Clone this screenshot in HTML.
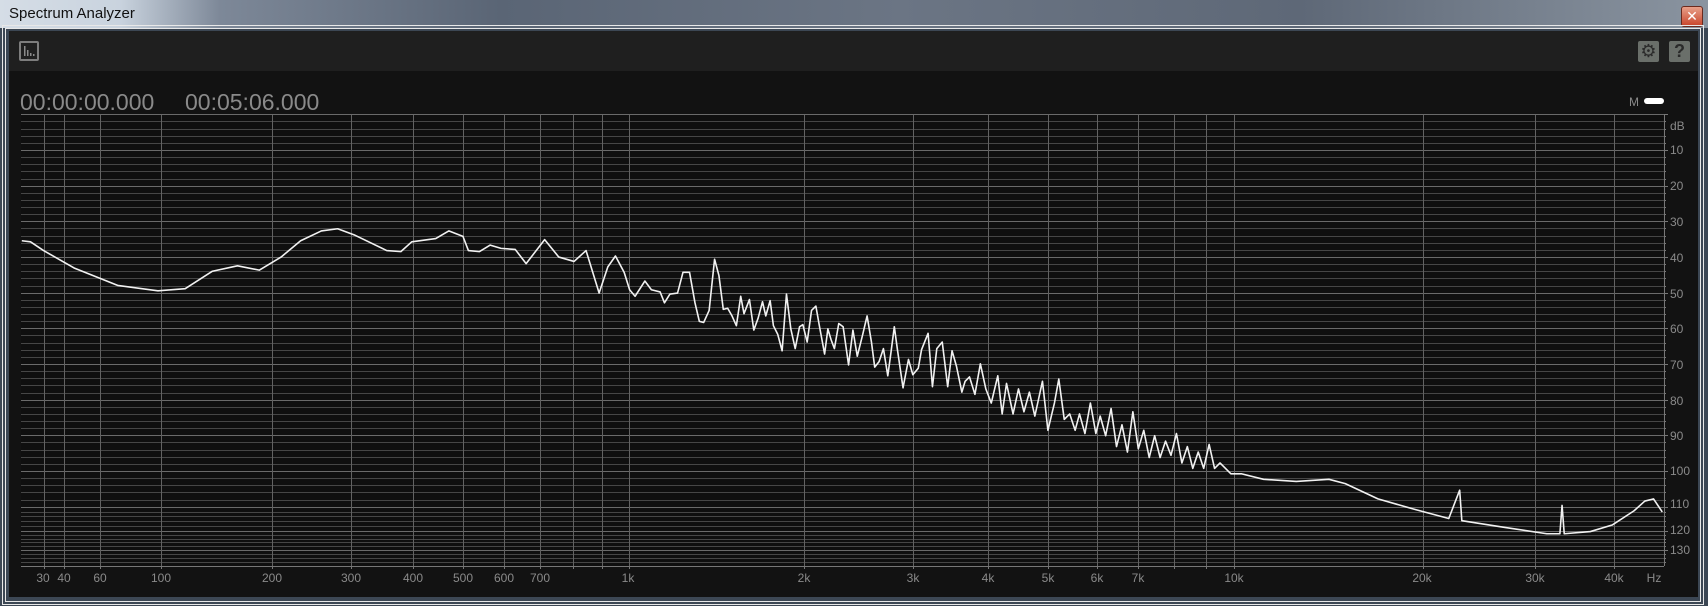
<!DOCTYPE html>
<html><head><meta charset="utf-8">
<style>
html,body{margin:0;padding:0;width:1708px;height:606px;overflow:hidden;background:#3c4754;font-family:"Liberation Sans","DejaVu Sans",sans-serif}
#title{position:absolute;left:0;top:0;width:1708px;height:28px;background:linear-gradient(90deg,#d5dde6 0px,#c9d3de 120px,#7d8898 220px,#5a6575 500px,#6b7584 900px,#5e6877 1300px,#8a94a0 1708px)}
#title span{position:absolute;left:9px;top:5px;font-size:15px;color:#111}
#close{position:absolute;left:1681px;top:6px;width:20px;height:19px;background:linear-gradient(#e8a08a,#c8442a);border:1px solid #6b2a1e;border-radius:3px;color:#fff;font-weight:bold;font-size:14px;text-align:center;line-height:19px}
#frame{position:absolute;left:5px;top:28px;width:1694px;height:572px;border:1px solid #e8e8e8;outline:1px solid #e8e8e8;outline-offset:2px}
#panel{position:absolute;left:9px;top:31px;width:1689px;height:566px;background:#121212}
#tool{position:absolute;left:0;top:0;width:1689px;height:40px;background:#1f1f1f}
.box{position:absolute;width:19px;height:19px;border-radius:2px}
.t{position:absolute;font-size:23px;color:#8a8a8a;top:58px}
.fl{position:absolute;top:571px;font-size:12px;color:#8a8a8a;transform:translateX(-50%)}
.dl{position:absolute;left:1670px;font-size:12px;color:#8a8a8a;transform:translateY(-50%)}
</style></head><body>
<div id="title"><span>Spectrum Analyzer</span></div>
<div id="close">✕</div>
<div id="frame"></div>
<div id="panel">
 <div id="tool">
  <div class="box" style="left:10px;top:10px;border:2px solid #7d7d7d;width:16px;height:16px">
   <svg width="16" height="16" style="position:absolute;left:0;top:0"><g fill="#8a8a8a"><rect x="3" y="3" width="1.5" height="10"/><rect x="6" y="7" width="1.5" height="6"/><rect x="9" y="10" width="1.5" height="3"/><rect x="12" y="11" width="1.5" height="2"/></g></svg>
  </div>
  <div class="box" style="left:1629px;top:10px;background:#6a6f6a;color:#2a2a2a;font-size:18px;text-align:center;line-height:20px;width:21px;height:21px">⚙</div>
  <div class="box" style="left:1660px;top:10px;background:#6a6f6a;color:#2a2a2a;font-size:18px;font-weight:bold;text-align:center;line-height:21px;width:21px;height:21px">?</div>
 </div>
 <div class="t" style="left:11px">00:00:00.000</div>
 <div class="t" style="left:176px">00:05:06.000</div>
 <div style="position:absolute;left:1620px;top:64px;font-size:12px;color:#8a8a8a">M</div>
 <div style="position:absolute;left:1635px;top:67px;width:20px;height:6px;border-radius:3px;background:#fff"></div>
</div>
<svg id="plot" width="1708" height="606" style="position:absolute;left:0;top:0">
 <rect x="21" y="115" width="1642" height="451" fill="#0f0f0f"/>
 <g id="grid"></g>
 <g transform="scale(1.0893)">
 <polyline fill="none" stroke="#f2f2f2" stroke-width="1.6" vector-effect="non-scaling-stroke" stroke-linejoin="round" points="20,221 28,222 40,230 68,246 108,262 145,267 170,265 195,249 218,244 238,248 258,236 276,221 295,212 310,210 326,216 355,230 368,231 378,222 400,219 412,212 425,217 430,230 440,231 450,225 460,228 473,229 483,242 500,220 513,236 527,240 538,230 550,269 558,245 565,235 573,250 578,266 583,272 592,258 598,266 606,268 610,278 615,270 622,269 627,250 633,250 638,278 642,295 646,296 651,285 656,238 660,253 664,284 668,283 672,290 676,299 680,272 683,288 688,275 692,303 696,292 700,277 703,290 707,276 710,299 714,307 718,322 722,270 726,302 730,320 734,300 737,298 741,314 745,285 749,281 752,298 757,325 760,302 763,312 766,320 770,297 774,300 779,335 783,303 787,327 792,307 796,290 800,314 803,337 807,332 811,320 815,345 818,323 821,300 824,322 829,356 834,330 838,344 843,338 846,321 852,306 856,355 860,320 865,314 870,355 874,322 878,336 883,360 886,350 890,346 895,362 900,334 905,357 910,370 916,345 920,380 924,352 930,380 935,357 940,378 945,360 950,382 957,350 962,395 968,370 972,348 977,385 982,380 987,395 991,380 996,398 1001,370 1006,398 1010,382 1015,400 1020,375 1025,410 1030,390 1035,415 1040,378 1045,412 1050,395 1055,420 1060,400 1065,420 1070,405 1075,418 1080,398 1085,425 1090,410 1095,430 1100,415 1105,430 1110,408 1115,430 1120,425 1130,435 1140,435 1160,440 1190,442 1220,440 1235,444 1265,458 1300,468 1330,476 1340,450 1342,478 1380,484 1420,490 1432,490 1434,464 1436,490 1460,488 1480,482 1500,469 1510,460 1518,458 1526,470"/>
 </g>
 <line x1="1664.5" y1="115" x2="1664.5" y2="566" stroke="#777"/>
 <line x1="21" y1="566.5" x2="1664" y2="566.5" stroke="#777"/>
</svg>
<div class="fl" style="left:43px">30</div><div class="fl" style="left:64px">40</div><div class="fl" style="left:100px">60</div>
<div class="fl" style="left:161px">100</div><div class="fl" style="left:272px">200</div><div class="fl" style="left:351px">300</div>
<div class="fl" style="left:413px">400</div><div class="fl" style="left:463px">500</div><div class="fl" style="left:504px">600</div>
<div class="fl" style="left:540px">700</div><div class="fl" style="left:628px">1k</div><div class="fl" style="left:804px">2k</div>
<div class="fl" style="left:913px">3k</div><div class="fl" style="left:988px">4k</div><div class="fl" style="left:1048px">5k</div>
<div class="fl" style="left:1097px">6k</div><div class="fl" style="left:1138px">7k</div><div class="fl" style="left:1234px">10k</div>
<div class="fl" style="left:1422px">20k</div><div class="fl" style="left:1535px">30k</div><div class="fl" style="left:1614px">40k</div>
<div class="fl" style="left:1654px">Hz</div>
<div class="dl" style="top:126px">dB</div><div class="dl" style="top:150px">10</div><div class="dl" style="top:186px">20</div>
<div class="dl" style="top:222px">30</div><div class="dl" style="top:258px">40</div><div class="dl" style="top:294px">50</div>
<div class="dl" style="top:329px">60</div><div class="dl" style="top:365px">70</div><div class="dl" style="top:401px">80</div>
<div class="dl" style="top:436px">90</div><div class="dl" style="top:471px">100</div><div class="dl" style="top:504px">110</div>
<div class="dl" style="top:530px">120</div><div class="dl" style="top:550px">130</div>
<script>
(function(){
var g=document.getElementById('grid'),s='';
function dy(d){if(d<=110)return 114.3+d*3.567;if(d<=120)return 506.7+(d-110)*2.4;if(d<=130)return 530.7+(d-120)*1.95;return 550.2+(d-130)*1.95;}
for(var d=0;d<=138;d+=2){var y=Math.round(dy(d))+.5;if(y>566)break;var maj=d%10==0;
s+='<line x1="21" x2="1664" y1="'+y+'" y2="'+y+'" stroke="'+(maj?'#6a6a6a':'#464646')+'"/>';
s+='<line x1="1664" x2="'+(maj?1668:1666)+'" y1="'+y+'" y2="'+y+'" stroke="#777"/>';}
var K=[[20,21],[30,43.5],[40,64.3],[60,100.2],[100,161.2],[200,272.3],[300,350.8],[400,412.9],[500,463],[600,504.3],[700,540.3],[1000,628.5],[2000,803.9],[3000,912.9],[4000,988],[5000,1048],[6000,1097],[7000,1138],[10000,1234],[20000,1422.5],[30000,1534.8],[40000,1614]];
function fx(f){for(var i=0;i<K.length-1;i++){if(f<=K[i+1][0]){var a=Math.log(K[i][0]),b=Math.log(K[i+1][0]);return K[i][1]+(Math.log(f)-a)/(b-a)*(K[i+1][1]-K[i][1]);}}return 0;}
var fs=[30,40,60,100,200,300,400,500,600,700,800,900,1000,2000,3000,4000,5000,6000,7000,8000,9000,10000,20000,30000,40000];
fs.forEach(function(f){var x=Math.round(fx(f))+.5;s+='<line x1="'+x+'" x2="'+x+'" y1="115" y2="566" stroke="#626262"/>';s+='<line x1="'+x+'" x2="'+x+'" y1="566" y2="569" stroke="#777"/>';});
g.innerHTML=s;
})();
</script>
</body></html>
